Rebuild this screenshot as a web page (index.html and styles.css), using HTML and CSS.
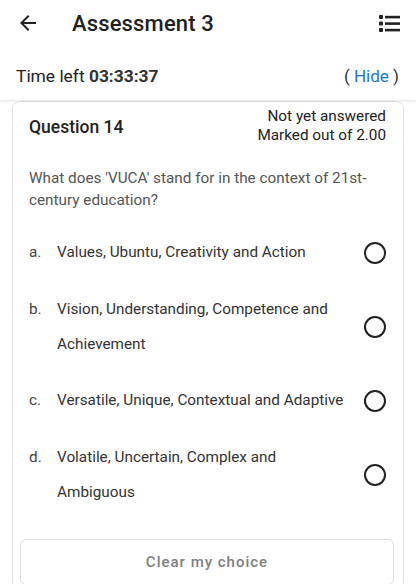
FILE: index.html
```html
<html>
<head>
  <meta charset="UTF-8">
  <title>Assessment 3</title>
  <link rel="stylesheet" href="styles.css">
</head>
<body>
  <div class="top">
    <div class="app-bar">
      <svg class="back" width="24" height="24" viewBox="0 0 24 24">
        <path d="M20 11H7.83l5.59-5.59L12 4l-8 8 8 8 1.41-1.41L7.83 13H20v-2z" fill="#222"/>
      </svg>
      <div class="title">Assessment 3</div>
      <svg class="menu" width="24" height="24" viewBox="0 0 24 24">
        <rect x="2" y="4" width="4" height="4" rx="1" fill="#222"/>
        <rect x="2" y="10.5" width="4" height="4" rx="1" fill="#222"/>
        <rect x="2" y="17" width="4" height="4" rx="1" fill="#222"/>
        <rect x="8" y="4.8" width="15" height="2.6" fill="#222"/>
        <rect x="8" y="11.3" width="15" height="2.6" fill="#222"/>
        <rect x="8" y="17.8" width="15" height="2.6" fill="#222"/>
      </svg>
    </div>
    <div class="timer">
      <div>Time left <b>03:33:37</b></div>
      <div class="hide">( <span>Hide</span> )</div>
    </div>
  </div>

  <div class="card">
    <div class="q-head">
      <div class="q-no">Question 14</div>
      <div class="q-state">
        <div>Not yet answered</div>
        <div>Marked out of 2.00</div>
      </div>
    </div>
    <div class="q-text">What does 'VUCA' stand for in the context of 21st-century education?</div>

    <div class="answers">
      <div class="answer">
        <span class="letter">a.</span>
        <span class="label">Values, Ubuntu, Creativity and Action</span>
        <span class="radio"></span>
      </div>
      <div class="answer">
        <span class="letter">b.</span>
        <span class="label">Vision, Understanding, Competence and Achievement</span>
        <span class="radio"></span>
      </div>
      <div class="answer">
        <span class="letter">c.</span>
        <span class="label">Versatile, Unique, Contextual and Adaptive</span>
        <span class="radio"></span>
      </div>
      <div class="answer">
        <span class="letter">d.</span>
        <span class="label">Volatile, Uncertain, Complex and Ambiguous</span>
        <span class="radio"></span>
      </div>
    </div>

    <div class="clear-btn">Clear my choice</div>
  </div>
</body>
</html>
```

FILE: styles.css
```css
body {
  margin: 0;
  background: #fff;
  font-family: Roboto, "Noto Sans", Arial, sans-serif;
  color: #222;
  overflow: hidden;
}
.top {
  background: #fff;
  box-shadow: 0 1px 3px rgba(0,0,0,0.12);
  position: relative;
  z-index: 2;
}
.app-bar {
  height: 46px;
  display: flex;
  align-items: center;
  padding: 0 16px;
}
.title {
  margin-left: 32px;
  font-size: 22px;
  font-weight: 500;
  color: #222;
  letter-spacing: 0.15px;
  flex: 1;
}
.menu {
  margin-right: -1px;
}
.timer {
  height: 48px;
  padding: 6px 17px 0 16px;
  display: flex;
  align-items: center;
  justify-content: space-between;
  font-size: 17.4px;
  color: #222;
}
.timer b {
  font-weight: 700;
  color: #333;
}
.hide {
  font-size: 17px;
  color: #333;
}
.hide span {
  color: #1976d2;
}

.card {
  margin: 1px 12px 0;
  border: 1px solid #e3e3e3;
  border-radius: 8px;
  padding: 4px 17px 4px 16px;
}
.q-head {
  display: flex;
  align-items: center;
  justify-content: space-between;
  padding-top: 1px;
}
.q-no {
  font-size: 17.5px;
  font-weight: 500;
  color: #222;
  padding-top: 1px;
}
.q-state {
  text-align: right;
  font-size: 15.3px;
  line-height: 19px;
  color: #222;
}
.q-text {
  margin-top: 22px;
  font-size: 15.3px;
  line-height: 22px;
  color: #555;
}
.answers {
  margin-top: 24px;
  display: flex;
  flex-direction: column;
  gap: 21.5px;
}
.answer {
  display: flex;
  align-items: center;
  font-size: 15.3px;
  line-height: 35px;
  color: #333;
}
.letter {
  width: 28px;
  flex: none;
  align-self: flex-start;
  color: #444;
}
.label {
  flex: 1;
}
.radio {
  flex: none;
  width: 18px;
  height: 18px;
  border: 2px solid #222;
  border-radius: 50%;
  margin-left: 16px;
}
.clear-btn {
  margin: 29px -8px 0 -9px;
  height: 44px;
  border: 1px solid #ddd;
  border-radius: 6px;
  display: flex;
  align-items: center;
  justify-content: center;
  font-size: 15px;
  font-weight: 500;
  letter-spacing: 1px;
  color: #808080;
}
```
